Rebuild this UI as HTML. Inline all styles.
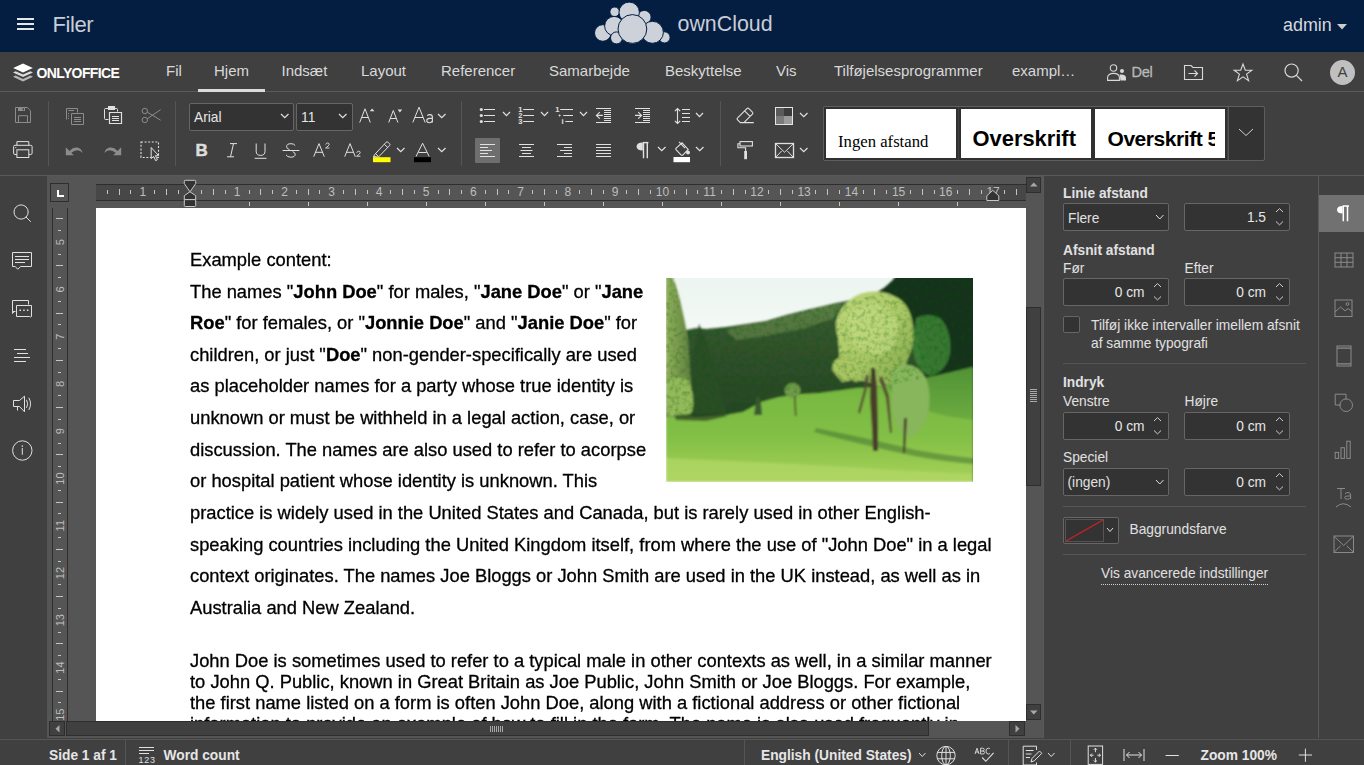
<!DOCTYPE html>
<html><head><meta charset="utf-8">
<style>
*{margin:0;padding:0;box-sizing:border-box}
html,body{width:1364px;height:765px;overflow:hidden;background:#404040;font-family:"Liberation Sans",sans-serif;color:#d9d9d9}
.a{position:absolute}
#top{left:0;top:0;width:1364px;height:52px;background:#041e42}
#tabs{left:0;top:52px;width:1364px;height:40px;background:#404040;border-bottom:1px solid #5a5a5a}
.tab{position:absolute;top:62px;font-size:15px;line-height:18px;color:#d9d9d9;white-space:nowrap}
#tb{left:0;top:92px;width:1364px;height:84px;background:#404040;border-bottom:1px solid #595959}
#lp{left:0;top:176px;width:48px;height:562px;background:#404040;border-right:1px solid #555}
#cv{left:48px;top:176px;width:996px;height:562px;background:#555}
#rp{left:1043px;top:176px;width:276px;height:562px;background:#404040;border-left:1px solid #5a5a5a}
#rb{left:1318px;top:176px;width:46px;height:562px;background:#404040;border-left:1px solid #5a5a5a}
#sb{left:0;top:739px;width:1364px;height:26px;background:#404040;border-top:1px solid #555}
#page{left:96px;top:208px;width:930px;height:513px;background:#fff;overflow:hidden;will-change:transform}
.doc{position:absolute;left:94px;font-size:18.33px;color:#000;white-space:nowrap;line-height:22px;-webkit-text-stroke:0.3px #000}
.doc b{font-weight:bold}
svg{position:absolute;overflow:visible}
.ui{font-size:13.75px;white-space:nowrap;position:absolute;line-height:16px}
</style></head><body>
<!-- TOP BAR -->
<div class="a" id="top">
  <div class="a" style="left:17px;top:18px;width:17px;height:2px;background:#e6e6e6"></div>
  <div class="a" style="left:17px;top:23px;width:17px;height:2px;background:#e6e6e6"></div>
  <div class="a" style="left:17px;top:28px;width:17px;height:2px;background:#e6e6e6"></div>
  <div class="a" style="left:52.5px;top:12.5px;font-size:22px;line-height:24px;color:#c9cdd5;letter-spacing:-0.4px">Filer</div>
  <svg style="left:0;top:0" width="1364" height="52">
    <g fill="#ccd1da" stroke="#041e42" stroke-width="1">
      <circle cx="614.7" cy="11.8" r="4.8"/>
      <circle cx="644.3" cy="17.2" r="6.8"/>
      <circle cx="629.2" cy="12.3" r="10.2"/>
      <circle cx="602.8" cy="33" r="8.3"/>
      <circle cx="614.2" cy="26" r="9.6"/>
      <circle cx="664.5" cy="37.4" r="5.6"/>
      <circle cx="652.4" cy="32.3" r="11"/>
      <circle cx="616.5" cy="37.9" r="6"/>
      <circle cx="632.4" cy="29" r="14.4"/>
    </g>
  </svg>
  <div class="a" style="left:677.5px;top:11.5px;font-size:21.4px;line-height:24px;color:#c9cdd5">ownCloud</div>
  <div class="a" style="left:1283px;top:14.5px;font-size:17.9px;line-height:20px;color:#d5d8de">admin</div>
  <svg style="left:1337px;top:24px" width="10" height="6"><path d="M0 0H10L5 5.5Z" fill="#ccc"/></svg>
</div>
<!-- TABS -->
<div class="a" id="tabs"></div>
<svg style="left:12px;top:62px" width="22" height="21" viewBox="0 0 22 21">
  <path d="M11 10.6L1.2 6.1 11 1.5 20.8 6.1Z" fill="#fff"/>
  <path d="M3.6 9.2L1 10.4 11 15 21 10.4 18.4 9.2 11 12.6Z" fill="#dcdcdc"/>
  <path d="M3.6 13.6L1 14.8 11 19.4 21 14.8 18.4 13.6 11 17Z" fill="#b8b8b8"/>
</svg>
<div class="a" style="left:36.5px;top:64.5px;font-size:14px;line-height:16px;font-weight:bold;color:#fff;letter-spacing:-0.62px">ONLYOFFICE</div>
<div class="tab" style="left:166px">Fil</div>
<div class="tab" style="left:214px">Hjem</div>
<div class="a" style="left:198px;top:89px;width:67px;height:3px;background:#dcdcdc"></div>
<div class="tab" style="left:281.5px">Indsæt</div>
<div class="tab" style="left:361px">Layout</div>
<div class="tab" style="left:441px">Referencer</div>
<div class="tab" style="left:549px">Samarbejde</div>
<div class="tab" style="left:665px">Beskyttelse</div>
<div class="tab" style="left:776px">Vis</div>
<div class="tab" style="left:834px">Tilføjelsesprogrammer</div>
<div class="tab" style="left:1012px">exampl…</div>
<svg style="left:1107px;top:64px" width="20" height="17" viewBox="0 0 20 17" fill="none" stroke="#d9d9d9" stroke-width="1.1">
  <circle cx="6.5" cy="4" r="3.2"/>
  <path d="M0.6 16.4V13.6C0.6 11 3 9.4 6.5 9.4S12.4 11 12.4 13.6V16.4Z"/>
  <circle cx="15" cy="7" r="2" fill="#d9d9d9" stroke="none"/>
  <path d="M12.8 10.6C15.8 10.2 19 11.2 19 13.6V16.4H13.4" fill="#d9d9d9" stroke="none"/>
</svg>
<div class="tab" style="left:1131.5px;top:62.5px;color:#b8b8b8;font-size:14.6px;letter-spacing:-0.3px;-webkit-text-stroke:0.3px #b8b8b8">Del</div>
<svg style="left:1183px;top:64px" width="21" height="17" viewBox="0 0 21 17" fill="none" stroke="#d9d9d9" stroke-width="1.1">
  <path d="M1.5 1.5H8L10 3.5H19.5V15.5H1.5Z"/>
  <path d="M5.5 9.5H14.5M11.5 6.5L14.5 9.5 11.5 12.5"/>
</svg>
<svg style="left:1233px;top:63px" width="20" height="19" viewBox="0 0 20 19" fill="none" stroke="#d9d9d9" stroke-width="1.1" stroke-linejoin="miter">
  <path d="M10 1L12.3 7.2H18.8L13.6 11.1 15.6 17.7 10 13.8 4.4 17.7 6.4 11.1 1.2 7.2H7.7Z"/>
</svg>
<svg style="left:1284px;top:63px" width="19" height="19" viewBox="0 0 19 19" fill="none" stroke="#d9d9d9" stroke-width="1.2">
  <circle cx="7.6" cy="7.6" r="6.6"/>
  <path d="M12.4 12.4L18 18"/>
</svg>
<div class="a" style="left:1330px;top:60px;width:25px;height:25px;border-radius:50%;background:#c0c0c0;color:#404040;font-size:15px;line-height:24px;text-align:center">A</div>

<!-- TOOLBAR -->
<div class="a" id="tb"></div>
<!--TOOLBAR_CONTENT-->
<svg style="left:15px;top:107px" width="17" height="17" viewBox="0 0 17 17" fill="none" stroke="#e0e0e0" stroke-width="1" ><path d="M0.5 0.5H12.3L15.5 3.7V15.5H0.5Z" stroke="#8c8c8c"/><rect x="3" y="0.5" width="7" height="3.5" fill="#8c8c8c" stroke="none"/><rect x="7.6" y="1.2" width="1.3" height="2.1" fill="#404040" stroke="none"/><path d="M3.5 15.5V8.7H12.5V15.5" stroke="#8c8c8c"/></svg>
<svg style="left:13px;top:141px" width="21" height="18" viewBox="0 0 21 18" fill="none" stroke="#e0e0e0" stroke-width="1" ><path d="M3.9 4.3V0.6H15.8V4.3"/><path d="M3.9 13.5H1.9Q0.6 13.5 0.6 12.2V5.6Q0.6 4.3 1.9 4.3H17.8Q19.1 4.3 19.1 5.6V12.2Q19.1 13.5 17.8 13.5H15.8"/><rect x="3.9" y="8.8" width="11.9" height="7.7"/><circle cx="2.8" cy="6.6" r="0.6" fill="#e0e0e0" stroke="none"/></svg>
<div class="a" style="left:48px;top:101px;width:1px;height:65px;background:#555"></div>
<div class="a" style="left:175px;top:101px;width:1px;height:65px;background:#555"></div>
<div class="a" style="left:461px;top:101px;width:1px;height:65px;background:#555"></div>
<div class="a" style="left:720px;top:101px;width:1px;height:65px;background:#555"></div>
<svg style="left:66px;top:108px" width="18" height="17" viewBox="0 0 18 17" fill="none" stroke="#e0e0e0" stroke-width="1" ><g stroke="#8c8c8c"><path d="M0.5 11.5V0.5H11.5V4.5"/><path d="M2.5 2.5H8M2.5 5V6M2.5 7.5V8.5M2.5 10V11"/><path d="M5.5 5.5H17.5V16.5H5.5Z"/><path d="M8 9.5H15M8 11.5H15M8 13.5H15"/></g></svg>
<svg style="left:104px;top:106px" width="18" height="19" viewBox="0 0 18 19" fill="none" stroke="#e0e0e0" stroke-width="1" ><path d="M4.5 2.5H1.5Q0.5 2.5 0.5 3.5V12.5Q0.5 13.5 1.5 13.5H4.5"/><path d="M10.5 2.5H12.5Q13.5 2.5 13.5 3.5V5.5"/><rect x="4.5" y="0.5" width="6" height="3" fill="#e0e0e0"/><path d="M5.5 6.5H17.5V17.5H5.5Z" stroke-width="1.2"/><path d="M8 10.5H15M8 12.5H15M8 14.5H15"/></svg>
<svg style="left:141px;top:107px" width="21" height="17" viewBox="0 0 21 17" fill="none" stroke="#e0e0e0" stroke-width="1" ><g stroke="#8c8c8c"><circle cx="3.8" cy="4" r="2.7"/><circle cx="3.8" cy="13" r="2.7"/><path d="M6.3 5.2L19.6 13.2M6.3 11.8L19.6 2.6"/></g></svg>
<svg style="left:65px;top:146px" width="19" height="11" viewBox="0 0 19 11" fill="none" stroke="#e0e0e0" stroke-width="1" ><path d="M0.8 1.2L0.8 9.3 8.8 9.3 6.3 6.8Q9.3 4.3 12.3 4.3Q15.4 4.5 17.6 7Q16.6 2.5 12.3 1.6Q8.3 0.9 4.5 4.9Z" fill="#8c8c8c" stroke="none"/></svg>
<svg style="left:103px;top:146px" width="19" height="11" viewBox="0 0 19 11" fill="none" stroke="#e0e0e0" stroke-width="1" ><path d="M18.2 1.2L18.2 9.3 10.2 9.3 12.7 6.8Q9.7 4.3 6.7 4.3Q3.6 4.5 1.4 7Q2.4 2.5 6.7 1.6Q10.7 0.9 14.5 4.9Z" fill="#8c8c8c" stroke="none"/></svg>
<svg style="left:140px;top:141px" width="22" height="22" viewBox="0 0 22 22" fill="none" stroke="#e0e0e0" stroke-width="1" ><rect x="1" y="1" width="17.5" height="15.5" stroke-dasharray="2 1.6" stroke-width="1.1"/><path d="M11.2 6.5V17.6L13.6 15.4 15.6 19.6 17.4 18.8 15.4 14.7H18.6Z" fill="#404040" stroke="#e0e0e0" stroke-width="1"/></svg>
<div class="a" style="left:189px;top:103px;width:105px;height:28px;background:#333;border:1px solid #666;border-radius:2px"></div><div class="ui" style="left:194px;top:110px;color:#e6e6e6">Arial</div>
<svg style="left:280px;top:113.2px" width="9.5" height="5.7" fill="none" stroke="#e0e0e0" stroke-width="1.2"><path d="M1 1L4.75 4.7L8.5 1"/></svg>
<div class="a" style="left:296px;top:103px;width:57px;height:28px;background:#333;border:1px solid #666;border-radius:2px"></div><div class="ui" style="left:301px;top:110px;color:#e6e6e6">11</div>
<svg style="left:338px;top:113.2px" width="9.5" height="5.7" fill="none" stroke="#e0e0e0" stroke-width="1.2"><path d="M1 1L4.75 4.7L8.5 1"/></svg>
<svg style="left:359px;top:107px" width="16" height="17" viewBox="0 0 16 17" fill="none" stroke="#e0e0e0" stroke-width="1" ><path d="M0.7 15.5L6 1.8 11.3 15.5M2.6 10.5H9.4"/><path d="M10.8 4.3L13.1 1.4 15.4 4.3Z" fill="#e0e0e0" stroke="none"/></svg>
<svg style="left:388px;top:108px" width="15" height="16" viewBox="0 0 15 16" fill="none" stroke="#e0e0e0" stroke-width="1" ><path d="M0.7 14.5L5.3 2.5 9.9 14.5M2.3 10.5H8.3"/><path d="M9.6 1.5H14.2L11.9 4.4Z" fill="#e0e0e0" stroke="none"/></svg>
<svg style="left:412px;top:106px" width="22" height="18" viewBox="0 0 22 18" fill="none" stroke="#e0e0e0" stroke-width="1" ><path d="M0.8 16.5L7 1.2 13.2 16.5M2.9 11.5H11.1"/><path d="M15.3 9.6Q16.2 8.6 18 8.6Q20.4 8.6 20.4 11V16.6M20.4 12.4H17.6Q14.8 12.4 14.8 14.6Q14.8 16.8 17.4 16.8Q19.6 16.8 20.4 14.7" stroke-width="1.1"/></svg>
<svg style="left:437px;top:113.2px" width="9.5" height="5.7" fill="none" stroke="#e0e0e0" stroke-width="1.2"><path d="M1 1L4.75 4.7L8.5 1"/></svg>
<div class="a" style="left:195.5px;top:141px;font-size:17px;line-height:20px;font-weight:bold;color:#dcdcdc;-webkit-text-stroke:0.5px #dcdcdc">B</div>
<svg style="left:226px;top:143px" width="12" height="15" viewBox="0 0 12 15" fill="none" stroke="#e0e0e0" stroke-width="1" ><path d="M4 0.6H11M1 13.8H8M7.5 0.6L4.5 13.8"/></svg>
<svg style="left:254px;top:143px" width="14" height="16" viewBox="0 0 14 16" fill="none" stroke="#e0e0e0" stroke-width="1" ><path d="M2.2 0.5V8.3Q2.2 12.4 6.6 12.4Q11 12.4 11 8.3V0.5M0.7 15.3H12.5"/></svg>
<svg style="left:282px;top:143px" width="18" height="15" viewBox="0 0 18 15" fill="none" stroke="#e0e0e0" stroke-width="1" ><path d="M13.2 2.6Q12.2 0.7 8.9 0.7Q4.6 0.7 4.6 3.7Q4.6 5.6 7.5 6.6M10.6 8.6Q13.2 9.6 13.2 11.2Q13.2 14.2 8.9 14.2Q5.2 14.2 4 11.8M0.6 7.5H17.4"/></svg>
<svg style="left:313px;top:142px" width="17" height="16" viewBox="0 0 17 16" fill="none" stroke="#e0e0e0" stroke-width="1" ><path d="M0.7 14.7L6 1.6 11.3 14.7M2.5 10.3H9.5"/><path d="M12.7 2.6Q13.2 1 14.6 1Q16.2 1 16.2 2.5Q16.2 3.6 12.6 6H16.4" stroke-width="0.9"/></svg>
<svg style="left:344px;top:142px" width="17" height="17" viewBox="0 0 17 17" fill="none" stroke="#e0e0e0" stroke-width="1" ><path d="M0.7 14.7L6 1.6 11.3 14.7M2.5 10.3H9.5"/><path d="M12.7 10.8Q13.2 9.2 14.6 9.2Q16.2 9.2 16.2 10.7Q16.2 11.8 12.6 14.2H16.4" stroke-width="0.9"/></svg>
<svg style="left:372px;top:140px" width="20" height="23" viewBox="0 0 20 23" fill="none" stroke="#e0e0e0" stroke-width="1" ><path d="M3 14.2L14.2 2.2Q15 1.3 15.8 2.1L17.6 3.9Q18.4 4.7 17.6 5.5L6.4 17.1 1.5 16.4Z"/><path d="M12.3 4.3L15.8 7.6M3.6 13.6L6.4 16.5" /><path d="M1.6 16.3L1 17.2 3.5 17.2Z" fill="#e0e0e0" stroke="none"/><rect x="1" y="17.2" width="17.5" height="5" fill="#ffff00" stroke="none"/></svg>
<svg style="left:396px;top:146.7px" width="9.5" height="5.7" fill="none" stroke="#e0e0e0" stroke-width="1.2"><path d="M1 1L4.75 4.7L8.5 1"/></svg>
<svg style="left:414px;top:142px" width="18" height="21" viewBox="0 0 18 21" fill="none" stroke="#e0e0e0" stroke-width="1" ><path d="M2 14.5L8.6 1.2 15.2 14.5M4.5 10.5H12.7"/><rect x="0" y="15.2" width="17" height="5" fill="#000" stroke="none"/></svg>
<svg style="left:437px;top:146.7px" width="9.5" height="5.7" fill="none" stroke="#e0e0e0" stroke-width="1.2"><path d="M1 1L4.75 4.7L8.5 1"/></svg>
<svg style="left:478px;top:105px" width="19" height="20" viewBox="0 0 19 20" fill="none" stroke="#e0e0e0" stroke-width="1" ><circle cx="3.3" cy="4.5" r="1.6" fill="#e0e0e0" stroke="none"/><circle cx="3.3" cy="10.5" r="1.6" fill="#e0e0e0" stroke="none"/><circle cx="3.3" cy="16.5" r="1.6" fill="#e0e0e0" stroke="none"/><path d="M6 4.5H17M6 10.5H17M6 16.5H17" stroke-width="1.1"/></svg>
<svg style="left:502px;top:111.2px" width="9" height="5.7" fill="none" stroke="#e0e0e0" stroke-width="1.2"><path d="M1 1L4.5 4.7L8 1"/></svg>
<svg style="left:517px;top:105px" width="19" height="20" viewBox="0 0 19 20" fill="none" stroke="#e0e0e0" stroke-width="1" ><g fill="#e0e0e0" stroke="none" font-family="Liberation Sans" font-size="7.6px" font-weight="bold"><text x="1.2" y="7.3">1</text><text x="1.2" y="13.1">2</text><text x="1.2" y="19">3</text></g><path d="M6.2 4.5H17M6.2 10.5H17M6.2 16.5H17" stroke-width="1.1"/></svg>
<svg style="left:540px;top:111.2px" width="9" height="5.7" fill="none" stroke="#e0e0e0" stroke-width="1.2"><path d="M1 1L4.5 4.7L8 1"/></svg>
<svg style="left:554px;top:105px" width="20" height="20" viewBox="0 0 20 20" fill="none" stroke="#e0e0e0" stroke-width="1" ><g fill="#e0e0e0" stroke="none" font-family="Liberation Sans" font-size="7.6px" font-weight="bold"><text x="1.2" y="7.3">1</text><text x="7.4" y="19">i</text></g><path d="M4.6 10.5H6.6M5.6 9.5V11.5" stroke-width="0.9"/><path d="M6.2 4.5H19M9.2 10.5H19M11.4 16.5H19" stroke-width="1.1"/></svg>
<svg style="left:579px;top:111.2px" width="9" height="5.7" fill="none" stroke="#e0e0e0" stroke-width="1.2"><path d="M1 1L4.5 4.7L8 1"/></svg>
<svg style="left:595px;top:107px" width="17" height="17" viewBox="0 0 17 17" fill="none" stroke="#e0e0e0" stroke-width="1" ><path d="M1 1.5H16M1 15.5H16M9 3.5H16M9 5.5H16M9 7.5H16M9 9.5H16M9 11.5H16M9 13.5H16" stroke-width="1.1"/><path d="M1.4 8.4H7.8M4.8 5.1L1.4 8.4 4.8 11.7" stroke-width="1.1"/></svg>
<svg style="left:634px;top:107px" width="17" height="17" viewBox="0 0 17 17" fill="none" stroke="#e0e0e0" stroke-width="1" ><path d="M1 1.5H16M1 15.5H16M9 3.5H16M9 5.5H16M9 7.5H16M9 9.5H16M9 11.5H16M9 13.5H16" stroke-width="1.1"/><path d="M1 8.4H7.6M4.2 5.1L7.6 8.4 4.2 11.7" stroke-width="1.1"/></svg>
<svg style="left:674px;top:107px" width="18" height="18" viewBox="0 0 18 18" fill="none" stroke="#e0e0e0" stroke-width="1" ><path d="M3.5 1.5V16.5M0.8 4.2L3.5 1.5 6.2 4.2M0.8 13.8L3.5 16.5 6.2 13.8M8 2.5H16M8 6.5H16M8 10.5H16M8 14.5H16" stroke-width="1.1"/></svg>
<svg style="left:695px;top:112.2px" width="9" height="5.7" fill="none" stroke="#e0e0e0" stroke-width="1.2"><path d="M1 1L4.5 4.7L8 1"/></svg>
<div class="a" style="left:475px;top:138px;width:25px;height:25px;background:#6e6e6e;border-radius:1px"></div>
<svg style="left:479px;top:144px" width="17" height="15" viewBox="0 0 17 15" fill="none" stroke="#e0e0e0" stroke-width="1" ><path d="M1 0.50H16M1 3.50H9M1 6.50H13M1 9.50H9M1 12.50H16" stroke-width="1.1"/></svg>
<svg style="left:518px;top:144px" width="17" height="15" viewBox="0 0 17 15" fill="none" stroke="#e0e0e0" stroke-width="1" ><path d="M1 0.50H16M4 3.50H13M2.5 6.50H14.5M4 9.50H13M1 12.50H16" stroke-width="1.1"/></svg>
<svg style="left:556px;top:144px" width="17" height="15" viewBox="0 0 17 15" fill="none" stroke="#e0e0e0" stroke-width="1" ><path d="M1 0.50H16M8 3.50H16M4 6.50H16M8 9.50H16M1 12.50H16" stroke-width="1.1"/></svg>
<svg style="left:595px;top:144px" width="17" height="15" viewBox="0 0 17 15" fill="none" stroke="#e0e0e0" stroke-width="1" ><path d="M1 0.50H16M1 3.50H16M1 6.50H16M1 9.50H16M1 12.50H16" stroke-width="1.1"/></svg>
<svg style="left:636px;top:142px" width="13" height="17" viewBox="0 0 13 17" fill="none" stroke="#e0e0e0" stroke-width="1" ><path d="M6.8 0.6H12.4" stroke-width="1.4"/><path d="M6.8 0.6Q0.6 0.6 0.6 4.5Q0.6 8.5 6.8 8.5Z" fill="#e0e0e0" stroke="none"/><path d="M7.5 0.6V16.2M11.3 0.6V16.2" stroke-width="1.4"/></svg>
<svg style="left:657px;top:146.2px" width="9.5" height="5.7" fill="none" stroke="#e0e0e0" stroke-width="1.2"><path d="M1 1L4.75 4.7L8.5 1"/></svg>
<svg style="left:673px;top:140px" width="18" height="23" viewBox="0 0 18 23" fill="none" stroke="#e0e0e0" stroke-width="1" ><path d="M6 1.8L12 8.2" stroke-width="1.1"/><path d="M3.5 7.8L9 2.8 15.2 9.4 10 14.8Q9 15.8 8 14.8L3.2 9.8Q2.2 8.8 3.5 7.8Z" stroke-width="1.1"/><circle cx="15" cy="12.5" r="2" fill="#e0e0e0" stroke="none"/><rect x="0.5" y="17" width="16.5" height="5.2" fill="#fff" stroke="none"/></svg>
<svg style="left:695px;top:146.2px" width="9.5" height="5.7" fill="none" stroke="#e0e0e0" stroke-width="1.2"><path d="M1 1L4.75 4.7L8.5 1"/></svg>
<svg style="left:736px;top:107px" width="19" height="17" viewBox="0 0 19 17" fill="none" stroke="#e0e0e0" stroke-width="1" ><path d="M4.2 15.6H17.8M4.3 15.6L1.6 12.9Q0.6 11.9 1.6 10.9L10.9 1.6Q11.9 0.6 12.9 1.6L16.4 5.1Q17.4 6.1 16.4 7.1L7.9 15.6M8.6 3.9L14.1 9.4" stroke-width="1.1"/></svg>
<div class="a" style="left:775px;top:107px;width:18px;height:18px;border:1.5px solid #e6e6e6;background:linear-gradient(to right,#5b5b5b 50%,#3c3c3c 50%) top/100% 50% no-repeat,linear-gradient(to right,#7b7b7b 50%,#9b9b9b 50%) bottom/100% 50% no-repeat"></div>
<svg style="left:799px;top:112.2px" width="9.5" height="5.7" fill="none" stroke="#e0e0e0" stroke-width="1.2"><path d="M1 1L4.75 4.7L8.5 1"/></svg>
<svg style="left:737px;top:141px" width="17" height="19" viewBox="0 0 17 19" fill="none" stroke="#e0e0e0" stroke-width="1" ><rect x="3" y="0.6" width="12.4" height="4.4" stroke-width="1.1"/><path d="M3 2.8H0.9V6.8H8.6V10" stroke-width="1.1"/><rect x="7.2" y="10" width="2.8" height="8.2" fill="#e0e0e0" stroke="none"/></svg>
<svg style="left:774px;top:142px" width="21" height="16" viewBox="0 0 21 16" fill="none" stroke="#e0e0e0" stroke-width="1" ><rect x="1.5" y="1.5" width="18" height="14" stroke-width="1.3"/><path d="M1.8 1.8L10.5 10.2L19.2 1.8M1.8 15.2L7.6 9M19.2 15.2L13.4 9"/></svg>
<svg style="left:799px;top:147.2px" width="9.5" height="5.7" fill="none" stroke="#e0e0e0" stroke-width="1.2"><path d="M1 1L4.75 4.7L8.5 1"/></svg>
<div class="a" style="left:823px;top:106px;width:442px;height:55px;border:1px solid #5e5e5e;border-radius:2px;background:#404040"></div>
<div class="a" style="left:824px;top:107px;width:134px;height:53px;border:2px solid #303030;background:#fff;overflow:hidden"></div>
<div class="a" style="left:959px;top:107px;width:134px;height:53px;border:2px solid #303030;background:#fff;overflow:hidden"></div>
<div class="a" style="left:1093px;top:107px;width:134px;height:53px;border:2px solid #303030;background:#fff;overflow:hidden"></div>
<div class="a" style="left:1228px;top:107px;width:36px;height:53px;background:#333;border-left:1px solid #555;border-radius:0 2px 2px 0"></div>
<svg style="left:1238px;top:128px" width="16" height="9" fill="none" stroke="#d0d0d0" stroke-width="1"><path d="M1 1L8 7.5L15 1"/></svg>
<div class="a" style="left:838px;top:131.5px;font-family:'Liberation Serif',serif;font-size:16.7px;line-height:19px;color:#000;white-space:nowrap">Ingen afstand</div>
<div class="a" style="left:972.5px;top:127px;font-size:21.9px;line-height:24px;font-weight:bold;color:#000;white-space:nowrap">Overskrift</div>
<div class="a" style="left:1096px;top:107px;width:118.5px;height:53px;overflow:hidden"><div class="a" style="left:11.5px;top:20px;font-size:21px;letter-spacing:-0.45px;line-height:24px;font-weight:bold;color:#000;white-space:nowrap">Overskrift 5</div></div>
<!--/TOOLBAR_CONTENT--><!--/TOOLBAR_CONTENT--><!--/TOOLBAR_CONTENT--><!--/TOOLBAR_CONTENT--><!--/TOOLBAR_CONTENT--><!--/TOOLBAR_CONTENT--><!--/TOOLBAR_CONTENT--><!--/TOOLBAR_CONTENT--><!--/TOOLBAR_CONTENT--><!--/TOOLBAR_CONTENT--><!--/TOOLBAR_CONTENT--><!--/TOOLBAR_CONTENT--><!--/TOOLBAR_CONTENT--><!--/TOOLBAR_CONTENT--><!--/TOOLBAR_CONTENT--><!--/TOOLBAR_CONTENT--><!--/TOOLBAR_CONTENT--><!--/TOOLBAR_CONTENT--><!--/TOOLBAR_CONTENT--><!--/TOOLBAR_CONTENT--><!--/TOOLBAR_CONTENT--><!--/TOOLBAR_CONTENT--><!--/TOOLBAR_CONTENT--><!--/TOOLBAR_CONTENT--><!--/TOOLBAR_CONTENT--><!--/TOOLBAR_CONTENT--><!--/TOOLBAR_CONTENT--><!--/TOOLBAR_CONTENT--><!--/TOOLBAR_CONTENT--><!--/TOOLBAR_CONTENT--><!--/TOOLBAR_CONTENT--><!--/TOOLBAR_CONTENT--><!--/TOOLBAR_CONTENT-->
<!-- LEFT PANEL -->
<div class="a" id="lp"></div>
<!--LP_CONTENT-->
<svg style="left:12px;top:203px" width="22" height="22" viewBox="0 0 22 22" fill="none" stroke="#e0e0e0" stroke-width="1"><circle cx="9.1" cy="9" r="7.1"/><path d="M13.8 13.8L18.8 18.8"/></svg>
<svg style="left:11px;top:251px" width="22" height="21" viewBox="0 0 22 21" fill="none" stroke="#e0e0e0" stroke-width="1"><path d="M1.5 1.5H20.5V15.5H9.5L6.8 18.3 4.2 15.5H1.5Z"/><path d="M4 5.5H18M4 8.5H18M4 11.5H14"/></svg>
<svg style="left:11px;top:299px" width="22" height="19" viewBox="0 0 22 19" fill="none" stroke="#e0e0e0" stroke-width="1"><path d="M4.5 12.5H1.5V1.5H17.5V5.5"/><path d="M1.5 12.5V14.5L3.2 12.5"/><path d="M5.5 6.5H20.5V17.5L19.5 18 18.8 17.5H5.5Z"/><rect x="8.5" y="10.5" width="1.5" height="1.5" fill="#e0e0e0" stroke="none"/><rect x="12.2" y="10.5" width="1.5" height="1.5" fill="#e0e0e0" stroke="none"/><rect x="15.9" y="10.5" width="1.5" height="1.5" fill="#e0e0e0" stroke="none"/></svg>
<svg style="left:12px;top:347px" width="20" height="16" viewBox="0 0 20 16" fill="none" stroke="#e0e0e0" stroke-width="1"><path d="M2 2.5H14M5 6.5H16M2 10.5H18M2 14.5H14"/></svg>
<svg style="left:12px;top:395px" width="23" height="18" viewBox="0 0 23 18" fill="none" stroke="#e0e0e0" stroke-width="1"><path d="M1.5 5.5H7.5L12.5 1.2V16.8L7.5 11.5H1.5Z"/><path d="M5.5 11.5V15.5"/><path d="M14.5 4.8Q16.8 8.8 14.5 12.9M16.8 2.8Q20.3 8.8 16.8 14.9"/></svg>
<svg style="left:11px;top:439px" width="23" height="23" viewBox="0 0 23 23" fill="none" stroke="#e0e0e0" stroke-width="1"><circle cx="11.3" cy="11.5" r="9.7"/><path d="M11.3 9V15.8"/><circle cx="11.3" cy="7.1" r="0.8" fill="#e0e0e0" stroke="none"/></svg>
<!--/LP_CONTENT--><!--/LP_CONTENT--><!--/LP_CONTENT--><!--/LP_CONTENT--><!--/LP_CONTENT--><!--/LP_CONTENT--><!--/LP_CONTENT--><!--/LP_CONTENT--><!--/LP_CONTENT--><!--/LP_CONTENT--><!--/LP_CONTENT--><!--/LP_CONTENT--><!--/LP_CONTENT--><!--/LP_CONTENT--><!--/LP_CONTENT--><!--/LP_CONTENT--><!--/LP_CONTENT--><!--/LP_CONTENT--><!--/LP_CONTENT--><!--/LP_CONTENT--><!--/LP_CONTENT--><!--/LP_CONTENT--><!--/LP_CONTENT--><!--/LP_CONTENT--><!--/LP_CONTENT--><!--/LP_CONTENT--><!--/LP_CONTENT--><!--/LP_CONTENT--><!--/LP_CONTENT--><!--/LP_CONTENT--><!--/LP_CONTENT--><!--/LP_CONTENT-->
<!-- CANVAS -->
<div class="a" id="cv"></div>
<!--CV_CONTENT-->
<div class="a" style="left:50px;top:183px;width:19px;height:19px;border:1.5px solid #2e2e2e"></div>
<div class="a" style="left:57px;top:190px;width:2px;height:7px;background:#fff"></div><div class="a" style="left:57px;top:195px;width:7px;height:2px;background:#fff"></div>
<div class="a" style="left:96px;top:184px;width:930px;height:17px;background:#555;border-top:1px solid #2e2e2e;border-bottom:1px solid #2e2e2e"></div>
<div class="a" style="left:96px;top:185px;width:94px;height:15px;background:#474747"></div>
<div class="a" style="left:993px;top:185px;width:33px;height:15px;background:#474747"></div>
<svg style="left:96px;top:184px" width="930" height="17" fill="#bdbdbd" stroke="#c4c4c4" stroke-width="1" font-family="Liberation Sans" font-size="12px"><path d="M11.5 6V10"/><path d="M23.5 5V11"/><path d="M34.5 6V10"/><text x="46.8" y="11.6" text-anchor="middle" stroke="none">1</text><path d="M58.5 6V10"/><path d="M70.5 5V11"/><path d="M82.5 6V10"/><path d="M105.5 6V10"/><path d="M117.5 5V11"/><path d="M129.5 6V10"/><text x="141.2" y="11.6" text-anchor="middle" stroke="none">1</text><path d="M153.5 6V10"/><path d="M164.5 5V11"/><path d="M176.5 6V10"/><text x="188.5" y="11.6" text-anchor="middle" stroke="none">2</text><path d="M200.5 6V10"/><path d="M212.5 5V11"/><path d="M223.5 6V10"/><text x="235.7" y="11.6" text-anchor="middle" stroke="none">3</text><path d="M247.5 6V10"/><path d="M259.5 5V11"/><path d="M271.5 6V10"/><text x="283.0" y="11.6" text-anchor="middle" stroke="none">4</text><path d="M294.5 6V10"/><path d="M306.5 5V11"/><path d="M318.5 6V10"/><text x="330.2" y="11.6" text-anchor="middle" stroke="none">5</text><path d="M342.5 6V10"/><path d="M353.5 5V11"/><path d="M365.5 6V10"/><text x="377.4" y="11.6" text-anchor="middle" stroke="none">6</text><path d="M389.5 6V10"/><path d="M401.5 5V11"/><path d="M412.5 6V10"/><text x="424.7" y="11.6" text-anchor="middle" stroke="none">7</text><path d="M436.5 6V10"/><path d="M448.5 5V11"/><path d="M460.5 6V10"/><text x="471.9" y="11.6" text-anchor="middle" stroke="none">8</text><path d="M483.5 6V10"/><path d="M495.5 5V11"/><path d="M507.5 6V10"/><text x="519.2" y="11.6" text-anchor="middle" stroke="none">9</text><path d="M530.5 6V10"/><path d="M542.5 5V11"/><path d="M554.5 6V10"/><text x="566.4" y="11.6" text-anchor="middle" stroke="none">10</text><path d="M578.5 6V10"/><path d="M590.5 5V11"/><path d="M601.5 6V10"/><text x="613.6" y="11.6" text-anchor="middle" stroke="none">11</text><path d="M625.5 6V10"/><path d="M637.5 5V11"/><path d="M649.5 6V10"/><text x="660.9" y="11.6" text-anchor="middle" stroke="none">12</text><path d="M672.5 6V10"/><path d="M684.5 5V11"/><path d="M696.5 6V10"/><text x="708.1" y="11.6" text-anchor="middle" stroke="none">13</text><path d="M719.5 6V10"/><path d="M731.5 5V11"/><path d="M743.5 6V10"/><text x="755.4" y="11.6" text-anchor="middle" stroke="none">14</text><path d="M767.5 6V10"/><path d="M778.5 5V11"/><path d="M790.5 6V10"/><text x="802.6" y="11.6" text-anchor="middle" stroke="none">15</text><path d="M814.5 6V10"/><path d="M826.5 5V11"/><path d="M838.5 6V10"/><text x="849.8" y="11.6" text-anchor="middle" stroke="none">16</text><path d="M861.5 6V10"/><path d="M873.5 5V11"/><path d="M885.5 6V10"/><text x="897.1" y="11.6" text-anchor="middle" stroke="none">17</text><path d="M908.5 6V10"/><path d="M920.5 5V11"/><g stroke="none"></g></svg>
<svg style="left:96px;top:201px" width="930" height="7" stroke="#c4c4c4" stroke-width="1"><path d="M153.5 1V5"/><path d="M212.5 1V5"/><path d="M271.5 1V5"/><path d="M330.5 1V5"/><path d="M389.5 1V5"/><path d="M448.5 1V5"/><path d="M507.5 1V5"/><path d="M566.5 1V5"/><path d="M625.5 1V5"/><path d="M684.5 1V5"/><path d="M743.5 1V5"/><path d="M802.5 1V5"/><path d="M861.5 1V5"/></svg>
<svg style="left:183px;top:179px" width="14" height="29" viewBox="0 0 14 29" fill="#333" stroke="#c8c8c8" stroke-width="1"><path d="M2.2 1.3H11.8Q12.7 1.3 12.7 2.2V4.6L7 12.8 1.3 4.6V2.2Q1.3 1.3 2.2 1.3Z"/><path d="M7 12.8L12.7 16.6V20.6H1.3V16.6Z"/><path d="M1.3 20.6H12.7V26.6Q12.7 27.5 11.8 27.5H2.2Q1.3 27.5 1.3 26.6Z"/></svg>
<svg style="left:985px;top:189px" width="16" height="13" viewBox="0 0 16 13" fill="#333" stroke="#c8c8c8" stroke-width="1"><path d="M1.8 11.5V6.8L7.8 1.4 13.8 6.8V11.5Z"/></svg>
<div class="a" style="left:52px;top:208px;width:16px;height:513px;border-left:1px solid #2e2e2e;border-right:1px solid #2e2e2e"></div>
<svg style="left:52px;top:208px" width="16" height="513" fill="#bdbdbd" stroke="#c4c4c4" stroke-width="1" font-family="Liberation Sans" font-size="11px"><path d="M4 10.5H11"/><path d="M6 22.5H9"/><text transform="translate(12.2 34.3) rotate(-90)" text-anchor="middle" stroke="none">5</text><path d="M6 46.5H9"/><path d="M4 57.5H11"/><path d="M6 69.5H9"/><text transform="translate(12.2 81.5) rotate(-90)" text-anchor="middle" stroke="none">6</text><path d="M6 93.5H9"/><path d="M4 105.5H11"/><path d="M6 116.5H9"/><text transform="translate(12.2 128.8) rotate(-90)" text-anchor="middle" stroke="none">7</text><path d="M6 140.5H9"/><path d="M4 152.5H11"/><path d="M6 164.5H9"/><text transform="translate(12.2 176.0) rotate(-90)" text-anchor="middle" stroke="none">8</text><path d="M6 187.5H9"/><path d="M4 199.5H11"/><path d="M6 211.5H9"/><text transform="translate(12.2 223.3) rotate(-90)" text-anchor="middle" stroke="none">9</text><path d="M6 235.5H9"/><path d="M4 246.5H11"/><path d="M6 258.5H9"/><text transform="translate(12.2 270.5) rotate(-90)" text-anchor="middle" stroke="none">10</text><path d="M6 282.5H9"/><path d="M4 294.5H11"/><path d="M6 305.5H9"/><text transform="translate(12.2 317.7) rotate(-90)" text-anchor="middle" stroke="none">11</text><path d="M6 329.5H9"/><path d="M4 341.5H11"/><path d="M6 353.5H9"/><text transform="translate(12.2 365.0) rotate(-90)" text-anchor="middle" stroke="none">12</text><path d="M6 376.5H9"/><path d="M4 388.5H11"/><path d="M6 400.5H9"/><text transform="translate(12.2 412.2) rotate(-90)" text-anchor="middle" stroke="none">13</text><path d="M6 424.5H9"/><path d="M4 435.5H11"/><path d="M6 447.5H9"/><text transform="translate(12.2 459.5) rotate(-90)" text-anchor="middle" stroke="none">14</text><path d="M6 471.5H9"/><path d="M4 483.5H11"/><path d="M6 494.5H9"/><text transform="translate(12.2 506.7) rotate(-90)" text-anchor="middle" stroke="none">15</text></svg>
<!--PAGE-->
<div class="a" id="page">
<div class="doc" style="left:94px;top:40.95px">Example content:</div>
<div class="doc" style="left:94px;top:72.57px">The names "<b>John Doe</b>" for males, "<b>Jane Doe</b>" or "<b>Jane</b></div>
<div class="doc" style="left:94px;top:104.19px"><b>Roe</b>" for females, or "<b>Jonnie Doe</b>" and "<b>Janie Doe</b>" for</div>
<div class="doc" style="left:94px;top:135.81px">children, or just "<b>Doe</b>" non-gender-specifically are used</div>
<div class="doc" style="left:94px;top:167.43px">as placeholder names for a party whose true identity is</div>
<div class="doc" style="left:94px;top:199.05px">unknown or must be withheld in a legal action, case, or</div>
<div class="doc" style="left:94px;top:230.67px">discussion. The names are also used to refer to acorpse</div>
<div class="doc" style="left:94px;top:262.29px">or hospital patient whose identity is unknown. This</div>
<div class="doc" style="left:94px;top:293.91px">practice is widely used in the United States and Canada, but is rarely used in other English-</div>
<div class="doc" style="left:94px;top:325.53px">speaking countries including the United Kingdom itself, from where the use of "John Doe" in a legal</div>
<div class="doc" style="left:94px;top:357.15px">context originates. The names Joe Bloggs or John Smith are used in the UK instead, as well as in</div>
<div class="doc" style="left:94px;top:388.77px">Australia and New Zealand.</div>
<div class="doc" style="left:94px;top:441.85px">John Doe is sometimes used to refer to a typical male in other contexts as well, in a similar manner</div>
<div class="doc" style="left:94px;top:462.85px">to John Q. Public, known in Great Britain as Joe Public, John Smith or Joe Bloggs. For example,</div>
<div class="doc" style="left:94px;top:483.85px">the first name listed on a form is often John Doe, along with a fictional address or other fictional</div>
<div class="doc" style="left:94px;top:504.85px">information to provide an example of how to fill in the form. The name is also used frequently in</div>
<svg style="left:570px;top:70px" width="307" height="204" viewBox="0 0 307 204">
<defs>
 <linearGradient id="sky" x1="0" y1="0" x2="0" y2="1"><stop offset="0" stop-color="#ecf5f1"/><stop offset="0.4" stop-color="#f8fbf6"/><stop offset="1" stop-color="#fcfdf9"/></linearGradient>
 <linearGradient id="for" x1="0" y1="0" x2="0" y2="1"><stop offset="0" stop-color="#587c44"/><stop offset="0.22" stop-color="#35562f"/><stop offset="0.6" stop-color="#294826"/><stop offset="1" stop-color="#203d1e"/></linearGradient>
 <linearGradient id="mead" x1="0" y1="0" x2="0" y2="1"><stop offset="0" stop-color="#63a338"/><stop offset="0.25" stop-color="#79b942"/><stop offset="0.6" stop-color="#82bf45"/><stop offset="0.8" stop-color="#94c84e"/><stop offset="1" stop-color="#a9d35c"/></linearGradient>
 <linearGradient id="slope" x1="0" y1="0" x2="0" y2="1"><stop offset="0" stop-color="#4f9035"/><stop offset="1" stop-color="#6aa93f"/></linearGradient>
 <linearGradient id="tree" x1="0" y1="0" x2="1" y2="1"><stop offset="0" stop-color="#c0d87c"/><stop offset="0.5" stop-color="#abc866"/><stop offset="1" stop-color="#7fa44a"/></linearGradient>
 <linearGradient id="lcon" x1="0" y1="0" x2="1" y2="0"><stop offset="0" stop-color="#8faf5a"/><stop offset="1" stop-color="#587a3c"/></linearGradient>
 <filter id="bl" x="-5%" y="-5%" width="110%" height="110%"><feGaussianBlur stdDeviation="1"/></filter>
 <clipPath id="cp"><rect width="307" height="204"/></clipPath>
 <filter id="tex" x="0" y="0" width="100%" height="100%"><feTurbulence type="fractalNoise" baseFrequency="0.22" numOctaves="2" seed="3"/><feColorMatrix type="matrix" values="0 0 0 0 0  0 0 0 0 0.1  0 0 0 0 0  0 0 0 -2.2 1.25"/></filter>
 <clipPath id="land"><path d="M10 56L20 52 30 50 40 51 60 49 80 46 100 43 120 37 140 32 153 29 170 25 190 21 205 18 218 10 226 3 230 -2H310V90L282 95 256 101 222 108 190 110 154 115 135 116 113 119 95 124 77 134 60 137 30 139 0 140V0H8L14 20Z"/></clipPath>
</defs>
<g clip-path="url(#cp)">
<rect width="307" height="204" fill="url(#sky)"/>
<g filter="url(#bl)">
<path d="M10 56L20 52 30 50 40 51 60 49 80 46 100 43 120 37 140 32 153 29 170 25 190 21 205 18 218 10 226 3 230 -2H310V204H0V60Z" fill="url(#for)"/>
<path d="M60 52L80 47 100 44 120 38 140 33 160 28 175 26 168 40 140 50 100 58 70 62Z" fill="#6a8c4c" opacity="0.6"/>
<path d="M205 18L218 10 226 3 230 -2H310V92L282 96 256 100 252 60 238 30Z" fill="#18331a"/>
<path d="M250 40Q262 34 274 40 286 52 284 76 280 94 264 98 248 92 246 66Z" fill="#3f8438" opacity="0.85"/>
<path d="M0 -2H6L10 8 14 22 18 40 22 60 24 90 28 140H0Z" fill="url(#lcon)"/>
<path d="M24 138L26 100 29 70 33 46 39 60 47 84 54 112 62 138Z" fill="#2b4d27"/>
<path d="M0 104Q10 96 22 102 30 118 26 134 16 142 4 142 0 136Z" fill="#93b95a"/>
<path d="M0 140L30 139 60 137 77 134 95 124 113 119 135 116 154 115 190 110 222 108 256 101 282 95 307 89V204H0Z" fill="url(#mead)"/>
<path d="M222 108L256 101 282 95 307 89V142L280 138 250 130 230 120Z" fill="url(#slope)" opacity="0.9"/>
<path d="M8 137L48 135 62 138 40 143 10 142Z" fill="#2a4020" opacity="0.7"/>
<path d="M150 150Q200 160 250 172 285 178 307 180V186Q280 184 248 178 200 168 148 154Z" fill="#3f7030" opacity="0.5"/>
<path d="M0 180Q100 184 200 190 260 194 307 196V204H0Z" fill="#b2d766" opacity="0.7"/>
<ellipse cx="126.5" cy="112.5" rx="8" ry="7.5" fill="#6e9a48"/>
<path d="M128 118L129 138 130.5 138 129.5 118Z" fill="#4a4030"/>
<path d="M88 137L90 123 92 117 95 125 96 137Z" fill="#3a5a30"/>
<path d="M172 60Q166 44 176 30 186 16 202 14 216 12 228 18 242 24 246 42 250 60 244 76 238 92 232 104 220 110 208 108 200 100 190 104 180 100 174 88 170 74Z" fill="url(#tree)"/>
<path d="M182 40Q192 26 208 26 226 28 232 46 232 66 220 76 200 78 188 66Z" fill="#c5dc84" opacity="0.6"/>
<path d="M166 92Q166 80 178 78 192 80 194 92 188 104 176 104Z" fill="#a8c464"/>
<path d="M226 102Q224 90 236 86 252 86 260 100 266 116 262 136 256 154 244 160 230 154 226 132Z" fill="#88b65c"/>
<path d="M205 90L204 120 206 150 207 173 212 173 212 150 211 110 209 90Z" fill="#4a3c2a"/>
<path d="M213 100L220 120 224 155 226 155 223 118 216 98Z" fill="#5a4a34"/>
<path d="M200 96L198 112 192 134 194 136 200 114 203 98Z" fill="#5a4a34"/>
<path d="M238 140L237 175 239 175 241 140Z" fill="#4a3c2a"/>
</g>
<rect width="307" height="204" filter="url(#tex)" clip-path="url(#land)" opacity="0.3"/>
</g>
</svg>
</div>
<!--/PAGE-->
<div class="a" style="left:1026px;top:177px;width:15px;height:16px;background:#404040;border:1px solid #2e2e2e"></div>
<svg style="left:1030px;top:182px" width="8" height="5"><path d="M0 4.5H7.5L3.75 0.5Z" fill="#a8a8a8"/></svg>
<div class="a" style="left:1026px;top:307px;width:15px;height:179px;background:#404040;border:1px solid #2e2e2e"></div>
<svg style="left:1030px;top:389px" width="7" height="13" stroke="#a8a8a8" stroke-width="1"><path d="M0 0.5H7"/><path d="M0 2.5H7"/><path d="M0 4.5H7"/><path d="M0 6.5H7"/><path d="M0 8.5H7"/><path d="M0 10.5H7"/><path d="M0 12.5H7"/></svg>
<div class="a" style="left:1026px;top:704px;width:15px;height:16px;background:#404040;border:1px solid #2e2e2e"></div>
<svg style="left:1030px;top:710px" width="8" height="5"><path d="M0 0.5H7.5L3.75 4.5Z" fill="#a8a8a8"/></svg>
<div class="a" style="left:49px;top:721px;width:16px;height:15px;background:#404040;border:1px solid #2e2e2e"></div>
<svg style="left:55px;top:725px" width="5" height="8"><path d="M4.5 0V7.5L0.5 3.75Z" fill="#a8a8a8"/></svg>
<div class="a" style="left:66px;top:721px;width:863px;height:15px;background:#404040;border:1px solid #2e2e2e"></div>
<svg style="left:490px;top:726px" width="13" height="6" stroke="#a8a8a8" stroke-width="1"><path d="M0.5 0V6"/><path d="M2.5 0V6"/><path d="M4.5 0V6"/><path d="M6.5 0V6"/><path d="M8.5 0V6"/><path d="M10.5 0V6"/><path d="M12.5 0V6"/></svg>
<div class="a" style="left:1009px;top:721px;width:16px;height:15px;background:#404040;border:1px solid #2e2e2e"></div>
<svg style="left:1015px;top:725px" width="5" height="8"><path d="M0.5 0V7.5L4.5 3.75Z" fill="#a8a8a8"/></svg>
<!--/CV_CONTENT--><!--/CV_CONTENT--><!--/CV_CONTENT--><!--/CV_CONTENT--><!--/CV_CONTENT--><!--/CV_CONTENT--><!--/CV_CONTENT--><!--/CV_CONTENT--><!--/CV_CONTENT--><!--/CV_CONTENT--><!--/CV_CONTENT--><!--/CV_CONTENT--><!--/CV_CONTENT--><!--/CV_CONTENT--><!--/CV_CONTENT--><!--/CV_CONTENT--><!--/CV_CONTENT--><!--/CV_CONTENT--><!--/CV_CONTENT--><!--/CV_CONTENT--><!--/CV_CONTENT--><!--/CV_CONTENT--><!--/CV_CONTENT--><!--/CV_CONTENT--><!--/CV_CONTENT--><!--/CV_CONTENT--><!--/CV_CONTENT--><!--/CV_CONTENT--><!--/CV_CONTENT--><!--/CV_CONTENT--><!--/CV_CONTENT--><!--/CV_CONTENT--><!--/CV_CONTENT-->
<!-- RIGHT PANEL -->
<div class="a" id="rp"></div>
<!--RP_CONTENT-->
<div class="ui" style="left:1063px;top:186.4px;font-weight:bold;color:#e0e0e0">Linie afstand</div>
<div class="a" style="left:1063px;top:203px;width:106px;height:28px;background:#333;border:1px solid #666;border-radius:2px"></div>
<div class="ui" style="left:1068px;top:210.5px;color:#e0e0e0">Flere</div>
<svg style="left:1155px;top:214px" width="9.5" height="6" fill="none" stroke="#e0e0e0" stroke-width="1"><path d="M1 1L4.75 5L8.5 1"/></svg>
<div class="a" style="left:1184px;top:203px;width:106px;height:28px;background:#333;border:1px solid #666;border-radius:2px"></div>
<div class="ui" style="left:1184px;width:82px;text-align:right;top:210px;color:#e6e6e6">1.5</div>
<svg style="left:1274.7px;top:207px" width="9" height="20" fill="none" stroke="#d0d0d0" stroke-width="1"><path d="M1 5L4.5 1.6 8 5M1 14.5L4.5 17.9 8 14.5"/></svg>
<div class="ui" style="left:1063px;top:242.7px;font-weight:bold;color:#e0e0e0">Afsnit afstand</div>
<div class="ui" style="left:1063px;top:261.4px;color:#e0e0e0">Før</div>
<div class="ui" style="left:1184.5px;top:261.4px;color:#e0e0e0">Efter</div>
<div class="a" style="left:1063px;top:278px;width:106px;height:28px;background:#333;border:1px solid #666;border-radius:2px"></div>
<div class="ui" style="left:1063px;width:81.5px;text-align:right;top:285px;color:#e6e6e6">0 cm</div>
<svg style="left:1153.2px;top:282px" width="9" height="20" fill="none" stroke="#d0d0d0" stroke-width="1"><path d="M1 5L4.5 1.6 8 5M1 14.5L4.5 17.9 8 14.5"/></svg>
<div class="a" style="left:1184px;top:278px;width:106px;height:28px;background:#333;border:1px solid #666;border-radius:2px"></div>
<div class="ui" style="left:1184px;width:82px;text-align:right;top:285px;color:#e6e6e6">0 cm</div>
<svg style="left:1274.7px;top:282px" width="9" height="20" fill="none" stroke="#d0d0d0" stroke-width="1"><path d="M1 5L4.5 1.6 8 5M1 14.5L4.5 17.9 8 14.5"/></svg>
<div class="a" style="left:1063px;top:316px;width:17px;height:17px;background:#333;border:1px solid #666;border-radius:2px"></div>
<div class="ui" style="left:1091px;top:317.7px;color:#e0e0e0">Tilføj ikke intervaller imellem afsnit</div>
<div class="ui" style="left:1091px;top:335.7px;color:#e0e0e0">af samme typografi</div>
<div class="a" style="left:1063px;top:363px;width:243px;height:1px;background:#555"></div>
<div class="ui" style="left:1063px;top:375.1px;font-weight:bold;color:#e0e0e0">Indryk</div>
<div class="ui" style="left:1063px;top:394.1px;color:#e0e0e0">Venstre</div>
<div class="ui" style="left:1184.5px;top:394.1px;color:#e0e0e0">Højre</div>
<div class="a" style="left:1063px;top:412px;width:106px;height:28px;background:#333;border:1px solid #666;border-radius:2px"></div>
<div class="ui" style="left:1063px;width:81.5px;text-align:right;top:419px;color:#e6e6e6">0 cm</div>
<svg style="left:1153.2px;top:416px" width="9" height="20" fill="none" stroke="#d0d0d0" stroke-width="1"><path d="M1 5L4.5 1.6 8 5M1 14.5L4.5 17.9 8 14.5"/></svg>
<div class="a" style="left:1184px;top:412px;width:106px;height:28px;background:#333;border:1px solid #666;border-radius:2px"></div>
<div class="ui" style="left:1184px;width:82px;text-align:right;top:419px;color:#e6e6e6">0 cm</div>
<svg style="left:1274.7px;top:416px" width="9" height="20" fill="none" stroke="#d0d0d0" stroke-width="1"><path d="M1 5L4.5 1.6 8 5M1 14.5L4.5 17.9 8 14.5"/></svg>
<div class="ui" style="left:1063px;top:450.3px;color:#e0e0e0">Speciel</div>
<div class="a" style="left:1063px;top:468px;width:106px;height:28px;background:#333;border:1px solid #666;border-radius:2px"></div>
<div class="ui" style="left:1067.5px;top:475.2px;color:#e0e0e0">(ingen)</div>
<svg style="left:1155px;top:479px" width="9.5" height="6" fill="none" stroke="#e0e0e0" stroke-width="1"><path d="M1 1L4.75 5L8.5 1"/></svg>
<div class="a" style="left:1184px;top:468px;width:106px;height:28px;background:#333;border:1px solid #666;border-radius:2px"></div>
<div class="ui" style="left:1184px;width:82px;text-align:right;top:475px;color:#e6e6e6">0 cm</div>
<svg style="left:1274.7px;top:472px" width="9" height="20" fill="none" stroke="#d0d0d0" stroke-width="1"><path d="M1 5L4.5 1.6 8 5M1 14.5L4.5 17.9 8 14.5"/></svg>
<div class="a" style="left:1063px;top:506px;width:243px;height:1px;background:#555"></div>
<div class="a" style="left:1063px;top:517px;width:56px;height:27px;background:#333;border:1px solid #666;border-radius:2px"></div>
<svg style="left:1065px;top:519px" width="39" height="23"><rect x="0.5" y="0.5" width="38" height="22" fill="#333" stroke="#555"/><path d="M1 22L38 1" stroke="#d42020" stroke-width="1.3"/></svg>
<svg style="left:1106px;top:527px" width="8" height="5.5" fill="none" stroke="#e0e0e0" stroke-width="1"><path d="M1 1L4.0 4.5L7 1"/></svg>
<div class="ui" style="left:1129.5px;top:522.4px;color:#e0e0e0">Baggrundsfarve</div>
<div class="a" style="left:1063px;top:554px;width:243px;height:1px;background:#555"></div>
<div class="ui" style="left:1101px;top:566.0px;color:#e0e0e0">Vis avancerede indstillinger</div>
<div class="a" style="left:1101px;top:584px;width:167px;height:0;border-top:1px dotted #cfcfcf"></div>
<!--/RP_CONTENT--><!--/RP_CONTENT--><!--/RP_CONTENT--><!--/RP_CONTENT--><!--/RP_CONTENT--><!--/RP_CONTENT--><!--/RP_CONTENT--><!--/RP_CONTENT--><!--/RP_CONTENT--><!--/RP_CONTENT--><!--/RP_CONTENT--><!--/RP_CONTENT--><!--/RP_CONTENT--><!--/RP_CONTENT--><!--/RP_CONTENT--><!--/RP_CONTENT--><!--/RP_CONTENT--><!--/RP_CONTENT--><!--/RP_CONTENT--><!--/RP_CONTENT--><!--/RP_CONTENT--><!--/RP_CONTENT--><!--/RP_CONTENT--><!--/RP_CONTENT--><!--/RP_CONTENT--><!--/RP_CONTENT--><!--/RP_CONTENT--><!--/RP_CONTENT--><!--/RP_CONTENT--><!--/RP_CONTENT--><!--/RP_CONTENT--><!--/RP_CONTENT-->
<div class="a" id="rb"></div>
<!--RB_CONTENT-->
<div class="a" style="left:1319px;top:195px;width:45px;height:37px;background:#717171"></div>
<svg style="left:1336px;top:205px" width="14" height="17" viewBox="0 0 14 17" fill="none" stroke="#fff" stroke-width="1"><path d="M6.6 1H13" stroke-width="1.5"/><path d="M6.6 1Q1 1 1 4.8Q1 8.6 6.6 8.6Z" fill="#fff" stroke="none"/><path d="M7.3 1V16.2M11.5 1V16.2" stroke-width="1.5"/></svg>
<svg style="left:1334px;top:252px" width="20" height="17" viewBox="0 0 20 17" fill="none" stroke="#8a8a8a" stroke-width="1"><rect x="1" y="1" width="18" height="14"/><path d="M1 5.7H19M1 10.3H19M7 1V15M13 1V15"/></svg>
<svg style="left:1334px;top:299px" width="20" height="19" viewBox="0 0 20 19" fill="none" stroke="#8a8a8a" stroke-width="1"><rect x="1" y="1" width="17" height="16.5"/><path d="M1 13L6.5 8 11 11.8 14 9.5 18 12.5"/><circle cx="13.5" cy="5" r="1.4"/></svg>
<svg style="left:1336px;top:345px" width="16" height="22" viewBox="0 0 16 22" fill="none" stroke="#8a8a8a" stroke-width="1"><rect x="1" y="1" width="14" height="20"/><path d="M1 3.2H15M1 18.8H15" stroke-width="1.3"/></svg>
<svg style="left:1334px;top:393px" width="20" height="20" viewBox="0 0 20 20" fill="none" stroke="#8a8a8a" stroke-width="1"><path d="M7 12H1.2V1.2H12V6.5"/><circle cx="12.2" cy="12.2" r="6.3"/></svg>
<svg style="left:1334px;top:440px" width="20" height="20" viewBox="0 0 20 20" fill="none" stroke="#8a8a8a" stroke-width="1"><rect x="1.2" y="12.4" width="3.4" height="6"/><rect x="7" y="7.7" width="3.4" height="10.7"/><rect x="12.8" y="1.2" width="3.4" height="17.2"/></svg>
<svg style="left:1334px;top:487px" width="20" height="22" viewBox="0 0 20 22" fill="none" stroke="#8a8a8a" stroke-width="1"><path d="M3 1.5H11M7 1.5V12"/><path d="M11 6.8Q12 5.5 14 5.5Q16.6 5.5 16.6 8V12M16.6 9H13.6Q10.6 9 10.6 10.6Q10.6 12.2 13.2 12.2Q15.8 12.2 16.6 10.6"/><path d="M2 20Q9 13.5 17 20"/></svg>
<svg style="left:1333px;top:535px" width="22" height="19" viewBox="0 0 22 19" fill="none" stroke="#8a8a8a" stroke-width="1"><rect x="1" y="1" width="19.5" height="16.5"/><path d="M1 1.2L10.7 10.5 20.5 1.2M1 17.3L7.6 10.8M20.5 17.3L13.8 10.8"/></svg>
<!--/RB_CONTENT--><!--/RB_CONTENT--><!--/RB_CONTENT--><!--/RB_CONTENT--><!--/RB_CONTENT--><!--/RB_CONTENT--><!--/RB_CONTENT--><!--/RB_CONTENT--><!--/RB_CONTENT--><!--/RB_CONTENT--><!--/RB_CONTENT--><!--/RB_CONTENT--><!--/RB_CONTENT--><!--/RB_CONTENT--><!--/RB_CONTENT--><!--/RB_CONTENT--><!--/RB_CONTENT--><!--/RB_CONTENT--><!--/RB_CONTENT--><!--/RB_CONTENT--><!--/RB_CONTENT--><!--/RB_CONTENT--><!--/RB_CONTENT--><!--/RB_CONTENT--><!--/RB_CONTENT--><!--/RB_CONTENT--><!--/RB_CONTENT--><!--/RB_CONTENT--><!--/RB_CONTENT--><!--/RB_CONTENT--><!--/RB_CONTENT--><!--/RB_CONTENT-->
<!-- STATUS BAR -->
<div class="a" id="sb"></div>
<!--SB_CONTENT-->
<div class="ui" style="left:49px;top:747.8px;font-weight:bold;color:#e6e6e6">Side 1 af 1</div>
<div class="a" style="left:125px;top:740px;width:1px;height:25px;background:#555"></div>
<svg style="left:138px;top:746px" width="18" height="19" viewBox="0 0 18 19" fill="none" stroke="#e0e0e0" stroke-width="1"><path d="M1 1.5H16M1 4.5H16M1 7.5H11" stroke-width="1.2"/><text x="0.6" y="16.6" font-family="Liberation Sans" font-size="9px" fill="#e0e0e0" stroke="none" letter-spacing="0.7" transform="scale(1 1.04)">123</text></svg>
<div class="ui" style="left:163.5px;top:747.8px;font-weight:bold;color:#e6e6e6">Word count</div>
<div class="a" style="left:744px;top:740px;width:1px;height:25px;background:#555"></div>
<div class="ui" style="left:761px;top:747.8px;font-weight:bold;color:#e6e6e6">English (United States)</div>
<svg style="left:918px;top:752px" width="8.5" height="5.5" fill="none" stroke="#e0e0e0" stroke-width="1"><path d="M1 1L4.25 4.5L7.5 1"/></svg>
<svg style="left:936px;top:745px" width="21" height="21" viewBox="0 0 21 21" fill="none" stroke="#e0e0e0" stroke-width="1"><circle cx="10" cy="10.6" r="9.2"/><ellipse cx="10" cy="10.6" rx="4.3" ry="9.2"/><path d="M10 1.4V19.8M1.4 7.4H18.6M1.4 13.8H18.6"/></svg>
<svg style="left:974px;top:747px" width="21" height="17" viewBox="0 0 21 17" fill="none" stroke="#e0e0e0" stroke-width="1"><path d="M1 7L3 1.2 5 7M1.6 5H4.4M6.6 7V1.2H8.6Q10.2 1.2 10.2 2.6Q10.2 4 8.6 4H6.6M8.6 4Q10.6 4 10.6 5.5Q10.6 7 8.6 7H6.6M16 1.8Q15.4 1.2 14.2 1.2Q12 1.2 12 4.1Q12 7 14.2 7Q15.4 7 16 6.3" stroke-width="0.9"/><path d="M8.2 10.5L11.8 14.3 19.6 5.8" stroke-width="1.1"/></svg>
<div class="a" style="left:1008px;top:740px;width:1px;height:25px;background:#555"></div>
<svg style="left:1022px;top:745px" width="21" height="21" viewBox="0 0 21 21" fill="none" stroke="#e0e0e0" stroke-width="1"><path d="M14.5 5V1.2H1.2V20H14.5V17.5"/><path d="M3.8 5.5H11.5M3.8 9H9.5M3.8 12.5H8"/><path d="M9 17L10 13.5 17.5 6 19.8 8.3 12.3 15.8Z"/></svg>
<svg style="left:1047px;top:752px" width="8.5" height="5.5" fill="none" stroke="#e0e0e0" stroke-width="1"><path d="M1 1L4.25 4.5L7.5 1"/></svg>
<div class="a" style="left:1070px;top:740px;width:1px;height:25px;background:#555"></div>
<svg style="left:1087px;top:745px" width="17" height="20" viewBox="0 0 17 20" fill="none" stroke="#e0e0e0" stroke-width="1"><rect x="1.2" y="1" width="14.4" height="18.4"/><path d="M8.4 3.2V7.2M6.8 4.8L8.4 3.2 10 4.8M8.4 13V17.1M6.8 15.5L8.4 17.1 10 15.5M3.3 10.2H6.5M4.9 8.6L3.3 10.2 4.9 11.8M10.3 10.2H13.5M11.9 8.6L13.5 10.2 11.9 11.8"/></svg>
<svg style="left:1123px;top:748px" width="22" height="14" viewBox="0 0 22 14" fill="none" stroke="#e0e0e0" stroke-width="1"><path d="M1 1V13M21 1V13M3.5 7H18.5M6.5 4L3.5 7 6.5 10M15.5 4L18.5 7 15.5 10"/></svg>
<svg style="left:1165px;top:754px" width="15" height="3" viewBox="0 0 15 3" fill="none" stroke="#e0e0e0" stroke-width="1"><path d="M0.6 1.5H13.8"/></svg>
<div class="ui" style="left:1200.5px;top:747.8px;font-weight:bold;color:#e6e6e6">Zoom 100%</div>
<svg style="left:1298px;top:748px" width="15" height="15" viewBox="0 0 15 15" fill="none" stroke="#e0e0e0" stroke-width="1"><path d="M0.8 7H14M7.4 0.6V13.8"/></svg>
<!--/SB_CONTENT--><!--/SB_CONTENT--><!--/SB_CONTENT--><!--/SB_CONTENT--><!--/SB_CONTENT--><!--/SB_CONTENT--><!--/SB_CONTENT--><!--/SB_CONTENT--><!--/SB_CONTENT--><!--/SB_CONTENT--><!--/SB_CONTENT--><!--/SB_CONTENT--><!--/SB_CONTENT--><!--/SB_CONTENT--><!--/SB_CONTENT--><!--/SB_CONTENT--><!--/SB_CONTENT--><!--/SB_CONTENT--><!--/SB_CONTENT--><!--/SB_CONTENT--><!--/SB_CONTENT--><!--/SB_CONTENT--><!--/SB_CONTENT--><!--/SB_CONTENT--><!--/SB_CONTENT--><!--/SB_CONTENT--><!--/SB_CONTENT--><!--/SB_CONTENT--><!--/SB_CONTENT--><!--/SB_CONTENT--><!--/SB_CONTENT--><!--/SB_CONTENT-->
</body></html>
